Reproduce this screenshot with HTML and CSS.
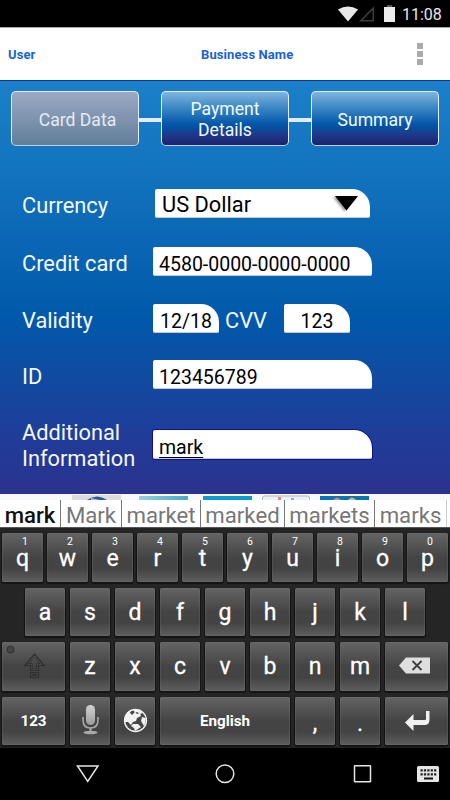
FILE: index.html
```html
<!DOCTYPE html>
<html>
<head>
	<title>Card Data</title>
	<meta charset="utf-8">
	<link rel="stylesheet" href="styles.css">
</head>
<body>

	<div class="status">
		<svg class="wifi" width="20" height="16" viewBox="0 0 20 16"><path d="M0 3.5Q10-2.500 20 3.5L10 15.5Z" fill="#e8e8e8"/></svg>
		<svg class="signal" width="16" height="16" viewBox="0 0 16 16"><path d="M14.2 2.2V14.8H1.8Z" fill="none" stroke="#3d3d3d" stroke-width="1.5"/></svg>
		<svg class="battery" width="11" height="17" viewBox="0 0 11 17"><path d="M3 0h5v2H3z" fill="#555"/><path d="M0 2h11v15H0z" fill="#ececec"/></svg>
		<span class="time">11:08</span>
	</div>

	<div class="header">
		<span class="user">User</span>
		<span class="business">Business Name</span>
		<div class="dots"><i></i><i></i><i></i></div>
	</div>

	<div class="main">
		<div class="steps">
			<div class="step current">Card Data</div>
			<div class="link"></div>
			<div class="step">Payment<br>Details</div>
			<div class="link"></div>
			<div class="step">Summary</div>
		</div>

		<div class="row currency">
			<label>Currency</label>
			<div class="field select">
				<span>US Dollar</span>
				<svg width="30" height="22" viewBox="0 0 30 22"><path d="M3 5h23L14.5 19.500z" fill="#000"/></svg>
			</div>
		</div>
		<div class="row card">
			<label>Credit card</label>
			<div class="field">4580-0000-0000-0000</div>
		</div>
		<div class="row validity">
			<label>Validity</label>
			<div class="field small">12/18</div>
			<label class="cvv">CVV</label>
			<div class="field small">123</div>
		</div>
		<div class="row id">
			<label>ID</label>
			<div class="field">123456789</div>
		</div>
		<div class="row info">
			<label>Additional<br>Information</label>
			<div class="field focus"><u>mark</u></div>
		</div>
	</div>

	<!-- tops of the card logos, the keyboard hides the rest -->
	<div class="logos">
		<svg width="450" height="6" viewBox="0 0 450 6">
			<path d="M72 1h49v5H72z" fill="#dcdcde"/>
			<path d="M87 6q10-7 20 0z" fill="#2b5595"/><path d="M91 4l9 2h-9z" fill="#aebfd6"/>
			<path d="M139 2h49v4h-49z" fill="url(#lg)"/>
			<path d="M203 2h49v4h-49z" fill="#0d9cd0"/>
			<path d="M262.500 6V4q0-2 2-2h43q2 0 2 2v2" fill="#eef1f4" stroke="#a9b9c6"/>
			<path d="M278 3h3v3h-3z" fill="#d88"/><path d="M291 4h3v2h-3z" fill="#9ab"/>
			<path d="M320 2h49v4h-49z" fill="#0a75ae"/>
			<path d="M333 6q4-5 8 0z" fill="#c88792"/><path d="M348 6q4-5 8 0z" fill="#c9bc83"/>
			<defs><linearGradient id="lg"><stop offset="0" stop-color="#9bd0e0"/><stop offset="1" stop-color="#45a8c8"/></linearGradient></defs>
		</svg>
	</div>

	<div class="suggest">
		<span class="s1">mark</span>
		<span class="s2">Mark</span>
		<span class="s3">market</span>
		<span class="s4">marked</span>
		<span class="s5">markets</span>
		<span class="s6">marks</span>
	</div>

	<div class="keyboard">
		<div class="keys first">
			<div class="key"><sup>1</sup><span>q</span></div>
			<div class="key"><sup>2</sup><span>w</span></div>
			<div class="key"><sup>3</sup><span>e</span></div>
			<div class="key"><sup>4</sup><span>r</span></div>
			<div class="key"><sup>5</sup><span>t</span></div>
			<div class="key"><sup>6</sup><span>y</span></div>
			<div class="key"><sup>7</sup><span>u</span></div>
			<div class="key"><sup>8</sup><span>i</span></div>
			<div class="key"><sup>9</sup><span>o</span></div>
			<div class="key"><sup>0</sup><span>p</span></div>
		</div>
		<div class="keys second">
			<div class="key">a</div>
			<div class="key">s</div>
			<div class="key">d</div>
			<div class="key">f</div>
			<div class="key">g</div>
			<div class="key">h</div>
			<div class="key">j</div>
			<div class="key">k</div>
			<div class="key">l</div>
		</div>
		<div class="keys">
			<div class="key wide icon">
				<svg width="64" height="49" viewBox="0 0 64 49" fill="none" stroke="#303030">
					<circle cx="8.500" cy="8.500" r="3.500" fill="#454545"/>
					<path d="M32.500 13L42 24.500H36.500V29.500H28.500V24.500H23Z" stroke-width="1.200"/>
					<path d="M32.500 16L38 22.500H34.500V27.500H30.500V22.500H27Z" stroke-width=".8"/>
					<path d="M28.500 31.500h8v5h-8z" stroke-width="1.200"/><path d="M30.500 33.500h4v1h-4z"/>
				</svg>
			</div>
			<div class="key">z</div>
			<div class="key">x</div>
			<div class="key">c</div>
			<div class="key">v</div>
			<div class="key">b</div>
			<div class="key">n</div>
			<div class="key">m</div>
			<div class="key wide icon">
				<svg width="64" height="49" viewBox="0 0 64 49"><path d="M14 24.500L21 16.500H45V32.500H21Z" fill="#dedede"/><path d="M27.500 20l9 9M36.500 20l-9 9" stroke="#3c3c3c" stroke-width="1.800"/></svg>
			</div>
		</div>
		<div class="keys last">
			<div class="key wide"><b>123</b></div>
			<div class="key icon">
				<svg width="41" height="49" viewBox="0 0 41 49">
					<defs><linearGradient id="mic" x2="0" y2="1"><stop offset="0" stop-color="#d2d2d2"/><stop offset="1" stop-color="#9b9b9b"/></linearGradient></defs>
					<rect x="16" y="9" width="9" height="20" rx="4.500" fill="url(#mic)"/>
					<path d="M13 21v3q0 8 7.500 8t7.500-8v-3" fill="none" stroke="#a9a9a9" stroke-width="1.600"/>
					<path d="M19.500 32h2v4h-2z" fill="#a9a9a9"/><ellipse cx="20.500" cy="36.500" rx="7" ry="1.800" fill="#a9a9a9"/>
				</svg>
			</div>
			<div class="key icon">
				<svg width="41" height="49" viewBox="0 0 41 49">
					<circle cx="20.500" cy="24.500" r="11" fill="#474747" stroke="#f0f0f0" stroke-width="1.300"/>
					<path d="M10 22Q11 16 16 14L15 17L17 19L20 16L22 18L25 17L26 20L22 22L21 25L18 26L16 29L13 26L10 26Z" fill="#f2f2f2"/>
					<path d="M18 13L24 14L28 17L25 18L22 16L20 17Z" fill="#f2f2f2"/>
					<path d="M18 28L23 28L26 31L23 33L20 35L19 32L16 30Z" fill="#f2f2f2"/>
					<path d="M27 21L31 22Q31 27 29 30L26 25Z" fill="#f2f2f2"/>
				</svg>
			</div>
			<div class="key space"><b>English</b></div>
			<div class="key mark">,</div>
			<div class="key mark">.</div>
			<div class="key wide icon">
				<svg width="64" height="49" viewBox="0 0 64 49"><path d="M20 26.500L28.500 18V24H40Q41 24 41 23V15H44.500V23.500Q44.500 29 39.500 29H28.500V35Z" fill="#f0f0f0"/></svg>
			</div>
		</div>
	</div>

	<div class="nav">
		<svg width="450" height="52" viewBox="0 0 450 52" fill="none" stroke="#e6e6e6" stroke-width="1.500">
			<path d="M77.500 18H98L87.700 33.500Z"/>
			<circle cx="225" cy="25.700" r="8.800"/>
			<rect x="354.500" y="17.800" width="16" height="16" rx=".5"/>
			<rect x="417" y="18" width="22" height="16" rx="1.500" fill="#e6e6e6" stroke="none"/>
			<path d="M420.500 22.300h16M420.500 26.300h16" stroke="#222" stroke-width="2.200" stroke-dasharray="2.200 1.200"/>
			<path d="M424 30.500h9" stroke="#111" stroke-width="2"/>
		</svg>
	</div>

</body>
</html>
```
FILE: styles.css
```css
* {
	box-sizing: border-box;
}

body {
	margin: 0;
	width: 450px;
	height: 800px;
	overflow: hidden;
	background: #fff;
	font-family: Roboto, "Liberation Sans", sans-serif;
}

svg {
	display: block;
	flex: none;
}

/* top */

.status {
	display: flex;
	height: 28px;
	padding: 6px 0 0 338px;
	background: #000;
	border-bottom: 1px solid #aaa;
	color: #e8e8e8;
}

.signal {
	margin-left: 1px;
}

.battery {
	margin: -1px 0 0 9px;
}

.time {
	margin-left: 7px;
	font-size: 16px;
	line-height: 17px;
}

.header {
	display: flex;
	align-items: center;
	height: 53px;
	padding: 0 27px 0 8px;
	border-bottom: 1px solid #083c92;
	color: #1863d0;
	font-size: 13px;
	font-weight: 700;
	letter-spacing: .1px;
}

.user {
	width: 193px;
}

.dots {
	display: flex;
	flex-direction: column;
	gap: 2px;
	margin-left: auto;
}

.dots i {
	width: 6px;
	height: 6px;
	background: #a9a9a9;
}

/* form */

.main {
	height: 413px;
	padding-top: 10px;
	background: linear-gradient(#1b80c9 0%, #1272bd 23%, #0158aa 58%, #1a429c 80%, #2a3390 98%, #2a3390 100%);
	color: #f4f8fe;
}

.steps {
	display: flex;
	align-items: center;
	padding: 0 11px;
	margin-bottom: 43px;
}

.step {
	display: flex;
	align-items: center;
	justify-content: center;
	width: 128px;
	height: 55px;
	padding-top: 3px;
	border: 1px solid #e6edf8;
	border-bottom-color: #c3cee4;
	border-radius: 5px;
	background: linear-gradient(#80b5df 0%, #3e8ac5 28%, #0155a8 62%, #1e3786 82%, #1b226f 100%);
	font-size: 17.600px;
	line-height: 21px;
	text-align: center;
}

.current {
	padding-left: 5px;
	background: linear-gradient(#9ba9c4, #627e99);
	color: #e5ebf3;
}

.link {
	width: 22px;
	height: 4px;
	margin-top: 3px;
	background: #e4ebf8;
}

.row {
	display: flex;
	align-items: center;
	height: 29px;
	padding-left: 22px;
}

.row label {
	width: 131px;
	padding-top: 5px;
	font-size: 21.800px;
	line-height: 26px;
}

.row .cvv {
	width: 65px;
	padding-left: 6px;
}

.field {
	width: 219px;
	height: 29px;
	padding: 4px 0 0 6px;
	border-radius: 2px 18px 2px 2px;
	border-bottom: 1px solid #c5cadb;
	background: #fff;
	color: #000;
	font-size: 19.500px;
	line-height: 27px;
	white-space: nowrap;
}

.small {
	width: 66px;
	padding-left: 0;
	text-align: center;
}

.select {
	display: flex;
	justify-content: space-between;
	width: 215px;
	margin-left: 2px;
	padding: 2px 8px 0 7px;
	font-size: 21.800px;
}

.select svg {
	filter: drop-shadow(-2px 1px 1px #999);
}

.focus {
	box-shadow: 0 0 0 1px #10138a;
}

.focus u {
	text-decoration-thickness: 1px;
	text-underline-offset: 3px;
}

.card {
	margin-top: 29px;
}

.validity {
	margin-top: 28px;
}

.validity label {
	padding-top: 4px;
}

.id {
	margin-top: 27px;
}

.info {
	margin-top: 41px;
}

.info label {
	padding-top: 3px;
}

.logos {
	height: 6px;
	background: #f8f8fa;
}

/* keyboard */

.suggest {
	display: flex;
	height: 28px;
	border-bottom: 1px solid #555;
	background: #fff;
	color: #777;
	font-size: 22.200px;
	line-height: 31px;
}

.suggest span {
	border-right: 1px solid #777;
	text-align: center;
}

.suggest .s1 { width: 61px; color: #111; font-weight: 500; }
.suggest .s2 { width: 61px; }
.suggest .s3 { width: 79px; }
.suggest .s4 { width: 84px; }
.suggest .s5 { width: 90px; }
.suggest .s6 { width: 72px; border-color: #ccc; }

.keyboard {
	display: flex;
	flex-direction: column;
	gap: 6px;
	height: 220px;
	padding: 5px 2px 0;
	background: #252525;
}

.keys {
	display: flex;
	gap: 5px;
}

.first {
	gap: 4px;
}

.second {
	padding-left: 23px;
}

.key {
	display: flex;
	align-items: center;
	justify-content: center;
	width: 40px;
	height: 48.500px;
	padding-top: 1px;
	border-radius: 2px;
	background: linear-gradient(#646464, #444 50%, #434343 72%, #5e5e5e);
	box-shadow: 0 1px 1px 1px #151515, inset 0 0 2px #777;
	color: #fff;
	font-size: 23px;
	-webkit-text-stroke: .3px #fff;
}

.first .key {
	flex-direction: column;
	justify-content: flex-start;
	width: 41px;
	padding-top: 2px;
}

.key sup {
	padding-left: 5px;
	font-size: 10.500px;
	line-height: 13px;
	-webkit-text-stroke: 0;
}

.first span {
	line-height: 22px;
}

.icon {
	padding: 0 0 1px;
}

.keys .wide {
	width: 63px;
}

.keys .space {
	width: 130px;
}

.key b {
	font-size: 15.200px;
	-webkit-text-stroke: 0;
}

.keys .mark {
	padding-top: 5px;
}

.nav {
	height: 52px;
	background: #000;
}
```
